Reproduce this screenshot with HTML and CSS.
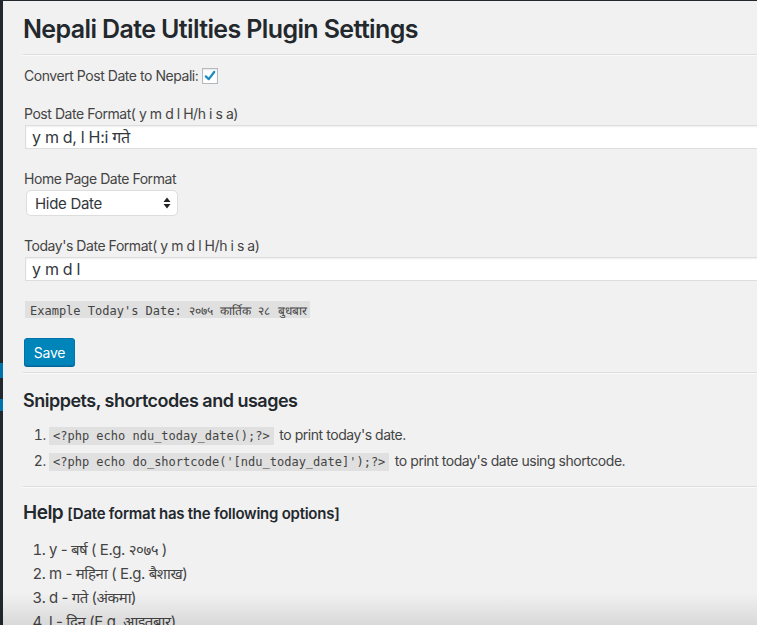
FILE: index.html
```html
<!DOCTYPE html>
<html lang="en">
<head>
<meta charset="utf-8">
<title>Nepali Date Utilties Plugin Settings</title>
<link rel="stylesheet" href="styles.css">
</head>
<body>
<div class="frame">
  <aside class="sidebar">
    <span class="mark mark-one"></span>
    <span class="mark mark-two"></span>
  </aside>
  <main class="wrap">
    <h1 class="title">Nepali Date Utilties Plugin Settings</h1>
    <hr class="rule">
    <form class="settings">
      <div class="check-row">
        <span>Convert Post Date to Nepali:</span>
        <span class="checkbox">
          <svg viewBox="0 0 16 16" width="16" height="16"><path d="M3.2 8.4 L6.6 11.6 L12.8 3.4" fill="none" stroke="#1e8cbe" stroke-width="2.6" stroke-linecap="round" stroke-linejoin="round"/></svg>
        </span>
      </div>
      <label class="field-label">Post Date Format( y m d l H/h i s a)</label>
      <div class="input">y m d, l H:i गते</div>
      <label class="field-label">Home Page Date Format</label>
      <div class="select">
        <span>Hide Date</span>
        <svg class="arrows" viewBox="0 0 8 12" width="8" height="12"><path d="M4 0.5 L7.5 5 L0.5 5 Z M4 11.5 L7.5 7 L0.5 7 Z" fill="#222"/></svg>
      </div>
      <label class="field-label">Today's Date Format( y m d l H/h i s a)</label>
      <div class="input">y m d l</div>
      <div class="example"><code>Example Today's Date: २०७५ कार्तिक २८ बुधबार</code></div>
      <button type="button" class="save">Save</button>
    </form>
    <hr class="rule rule-wide">
    <h2 class="section-title">Snippets, shortcodes and usages</h2>
    <ol class="snippets">
      <li><code>&lt;?php echo ndu_today_date();?&gt;</code> to print today's date.</li>
      <li><code>&lt;?php echo do_shortcode('[ndu_today_date]');?&gt;</code> to print today's date using shortcode.</li>
    </ol>
    <hr class="rule rule-help">
    <h2 class="section-title help-title"><span class="help-main">Help</span> <span class="help-sub">[Date format has the following options]</span></h2>
    <ol class="help">
      <li>y - बर्ष ( E.g. २०७५ )</li>
      <li>m - महिना ( E.g. बैशाख)</li>
      <li>d - गते (अंकमा)</li>
      <li>l - दिन (E.g. आइतबार)</li>
    </ol>
  </main>
  <div class="shade"></div>
</div>
</body>
</html>
```
FILE: styles.css
```css
html, body {
  margin: 0;
  padding: 0;
  height: 100%;
  overflow: hidden;
}
body {
  background: #f1f1f1;
  color: #444;
  font-family: Inter, "Noto Sans", "DejaVu Sans", sans-serif;
  font-size: 14px;
  letter-spacing: -0.45px;
}
.frame {
  position: relative;
  display: flex;
  height: 625px;
  border-top: 1px solid #23282d;
  box-sizing: border-box;
  overflow: hidden;
}
.sidebar {
  flex: 0 0 3px;
  background: #23282d;
  display: flex;
  flex-direction: column;
}
.mark {
  display: block;
  background: #0073aa;
  width: 3px;
}
.mark-one { margin-top: 362px; height: 15px; }
.mark-two { margin-top: 21px; height: 12px; }
.wrap {
  flex: 0 0 900px;
  padding-left: 20px;
}
.title {
  margin: 12px 0 0;
  font-size: 25px;
  line-height: 32px;
  font-weight: 600;
  color: #23282d;
  letter-spacing: -0.62px;
}
.rule {
  margin: 9px 0 0;
  border: 0;
  border-top: 1px solid #ddd;
  border-bottom: 1px solid #fafafa;
  height: 0;
}
.settings {
  display: flex;
  flex-direction: column;
  align-items: flex-start;
}
.check-row {
  margin: 10px 0 0 1px;
  line-height: 20px;
  display: flex;
  align-items: center;
  gap: 4px;
}
.checkbox {
  width: 14px;
  height: 14px;
  border: 1px solid #b4b9be;
  background: #fff;
  box-shadow: inset 0 1px 2px rgba(0,0,0,.1);
  display: flex;
  align-items: center;
  justify-content: center;
}
.field-label {
  margin: 18px 0 0 1px;
  line-height: 20px;
}
.input + .field-label, .select + .field-label { margin-top: 20px; }
.input {
  margin: 1px 0 0 2px;
  box-sizing: border-box;
  width: 860px;
  height: 24px;
  padding: 0 6px;
  line-height: 22px;
  font-size: 16px;
  letter-spacing: -0.3px;
  color: #32373c;
  background: #fff;
  border: 1px solid #ddd;
  box-shadow: inset 0 1px 2px rgba(0,0,0,.07);
}
.select {
  margin: 1px 0 0 3px;
  box-sizing: border-box;
  width: 152px;
  height: 26px;
  padding: 0 6px 0 8px;
  display: flex;
  align-items: center;
  justify-content: space-between;
  font-size: 15px;
  letter-spacing: -0.3px;
  color: #32373c;
  background: #fff;
  border: 1px solid #ddd;
  border-radius: 5px;
}
.example {
  margin: 20px 0 0 2px;
  height: 17px;
  overflow: hidden;
  background: rgba(0,0,0,.07);
  line-height: 17px;
  padding: 0 3px 0 5px;
}
.example code, .snippets code {
  font-family: "DejaVu Sans Mono", "Liberation Mono", monospace;
  font-size: 12px;
  letter-spacing: 0;
  color: #444;
}
.save {
  margin: 20px 0 0 1px;
  width: 51px;
  height: 28px;
  padding: 0;
  font-family: inherit;
  font-size: 14px;
  letter-spacing: -0.2px;
  color: #fff;
  background: #0085ba;
  border: 1px solid #0073aa;
  border-radius: 3px;
  box-shadow: 0 1px 0 #006799;
}
.rule-wide { margin-top: 6px; }
.section-title {
  margin: 16px 0 0;
  font-size: 18px;
  line-height: 22px;
  font-weight: 600;
  color: #23282d;
  letter-spacing: -0.5px;
}
.snippets {
  margin: 10px 0 0;
  padding-left: 26px;
}
.snippets li {
  line-height: 26px;
  height: 26px;
}
.snippets code {
  display: inline-block;
  line-height: 18px;
  background: rgba(0,0,0,.07);
  padding: 0 4px;
  margin-right: 2px;
}
.rule-help { margin-top: 12px; }
.help-title {
  margin-top: 14px;
}
.help-main {
  font-size: 19px;
  letter-spacing: -0.5px;
}
.help-sub {
  font-size: 15px;
  font-weight: 600;
  letter-spacing: -0.25px;
}
.help {
  margin: 13px 0 0;
  padding-left: 26px;
  font-size: 15px;
}
.help li {
  line-height: 24px;
  height: 24px;
}
.shade {
  position: absolute;
  left: 0;
  right: 0;
  bottom: 0;
  height: 32px;
  background: linear-gradient(to bottom, rgba(0,0,0,0), rgba(0,0,0,.1));
  pointer-events: none;
}
```
